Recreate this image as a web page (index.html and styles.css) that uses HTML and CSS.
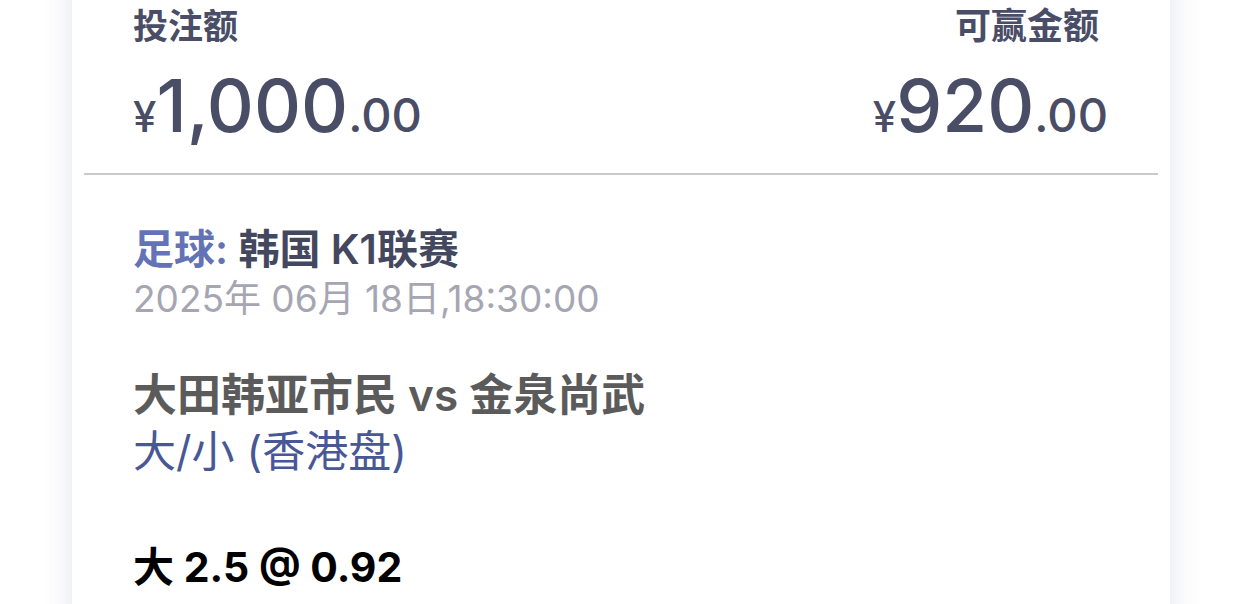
FILE: index.html
```html
<!DOCTYPE html>
<html lang="zh-CN">
<head>
  <meta charset="UTF-8">
  <meta name="viewport" content="width=device-width, initial-scale=1.0">
  <title>注单详情</title>
  <link rel="stylesheet" href="styles.css">
</head>
<body>
  <div class="bet-card">
    <div class="summary">
      <div class="summary-item">
        <div class="summary-label">投注额</div>
        <div class="amount"><span class="currency">¥</span><span class="integer">1,000</span><span class="decimal">.00</span></div>
      </div>
      <div class="summary-item align-right">
        <div class="summary-label">可赢金额</div>
        <div class="amount"><span class="currency">¥</span><span class="integer">920</span><span class="decimal">.00</span></div>
      </div>
    </div>

    <div class="divider"></div>

    <div class="bet-detail">
      <div class="league"><span class="sport">足球:</span> 韩国 K1联赛</div>
      <div class="match-time">2025年 06月 18日,18:30:00</div>

      <div class="teams">大田韩亚市民 vs 金泉尚武</div>
      <div class="market">大/小 (香港盘)</div>

      <div class="selection">大 2.5 @ 0.92</div>
    </div>
  </div>
</body>
</html>
```

FILE: styles.css
```css
body {
  margin: 0;
  background-color: #ffffff;
  font-family: 'Inter', 'Noto Sans CJK SC', sans-serif;
  overflow: hidden;
}
.bet-card {
  width: 1098px;
  margin: -40px 0 0 72px;
  padding-top: 40px;
  padding-bottom: 60px;
  background-color: #ffffff;
  box-shadow: 0 0 30px rgba(60, 70, 120, 0.14);
}
.summary {
  display: flex;
  justify-content: space-between;
  padding: 6px 62px 0 61px;
}
.summary-item {
  display: flex;
  flex-direction: column;
}
.align-right {
  align-items: flex-end;
}
.summary-label {
  font-size: 35px;
  font-weight: 700;
  line-height: 40px;
  color: #494d66;
}
.align-right .summary-label {
  margin-right: 9px;
  font-size: 36px;
}
.amount {
  margin-top: 20px;
  color: #494d66;
  font-weight: 500;
  line-height: 80px;
  white-space: nowrap;
}
.currency {
  font-size: 42px;
}
.integer {
  font-size: 73px;
}
.decimal {
  font-size: 47px;
}
.divider {
  margin: 7px 12px 0;
  border-top: 2px solid #c9c9ce;
}
.bet-detail {
  padding: 50px 61px 0;
}
.league {
  font-size: 41px;
  font-weight: 600;
  line-height: 48px;
  color: #44485f;
}
.sport {
  color: #6373b6;
}
.match-time {
  font-size: 37px;
  line-height: 52px;
  color: #a5a6b2;
}
.teams {
  margin-top: 42px;
  font-size: 44px;
  font-weight: 600;
  line-height: 56px;
  color: #5b5b5b;
}
.market {
  font-size: 43px;
  line-height: 56px;
  color: #485795;
}
.selection {
  margin-top: 60px;
  font-size: 41px;
  font-weight: 700;
  line-height: 56px;
  color: #000000;
}
```
